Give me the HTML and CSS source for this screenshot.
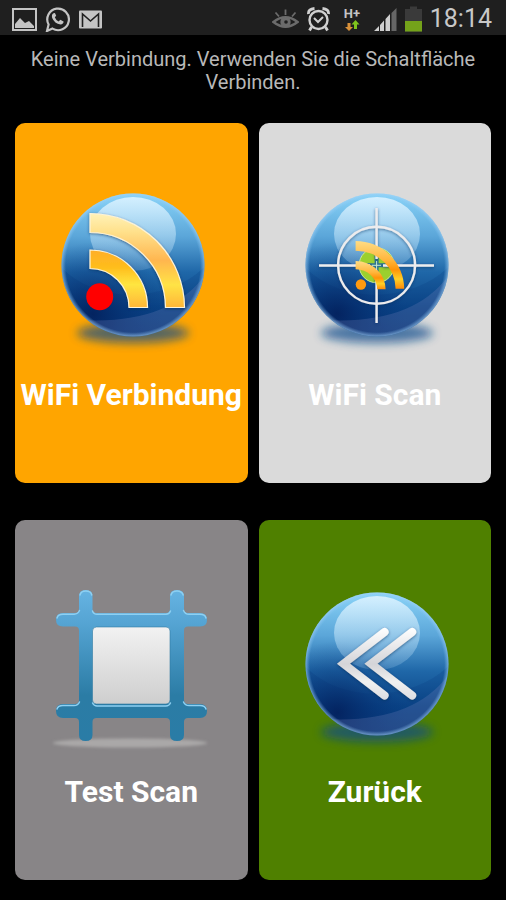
FILE: index.html
```html
<!DOCTYPE html>
<html lang="de">
<head>
  <meta charset="UTF-8">
  <title>WiFi Scan</title>
  <meta name="viewport" content="width=device-width, initial-scale=1">
  <link rel="stylesheet" href="styles.css">
</head>
<body>

  <!-- shared gradients and the glass ball -->
  <svg class="defs" aria-hidden="true">
    <defs>
      <linearGradient id="ballFill" x1="0" y1="0" x2="0" y2="1">
        <stop offset="0" stop-color="#8ad4f8"/>
        <stop offset="0.3" stop-color="#5ba6d9"/>
        <stop offset="0.55" stop-color="#1f67a8"/>
        <stop offset="0.8" stop-color="#0b4587"/>
        <stop offset="1" stop-color="#0a3a78"/>
      </linearGradient>
      <radialGradient id="ballDark" cx="0.22" cy="0.84" r="0.5">
        <stop offset="0" stop-color="#021a55" stop-opacity="0.75"/>
        <stop offset="1" stop-color="#04357c" stop-opacity="0"/>
      </radialGradient>
      <radialGradient id="ballRim" cx="0.5" cy="0.5" r="0.5">
        <stop offset="0.94" stop-color="#8cc8f4" stop-opacity="0"/>
        <stop offset="1" stop-color="#a5d2f6" stop-opacity="0.6"/>
      </radialGradient>
      <linearGradient id="ballShine" x1="0" y1="0" x2="0" y2="1">
        <stop offset="0" stop-color="#d8f1ff" stop-opacity="0.95"/>
        <stop offset="0.5" stop-color="#bfe2f7" stop-opacity="0.6"/>
        <stop offset="1" stop-color="#a5cfee" stop-opacity="0.2"/>
      </linearGradient>
      <linearGradient id="wave" x1="0" y1="0" x2="0" y2="1">
        <stop offset="0" stop-color="#fff2b8"/>
        <stop offset="0.2" stop-color="#ffe08a"/>
        <stop offset="0.5" stop-color="#ffb64f"/>
        <stop offset="0.76" stop-color="#ffe345"/>
        <stop offset="1" stop-color="#ffb638"/>
      </linearGradient>
      <linearGradient id="waveInner" x1="0" y1="0" x2="0" y2="1">
        <stop offset="0" stop-color="#ffae28"/>
        <stop offset="0.3" stop-color="#ffbd1c"/>
        <stop offset="0.6" stop-color="#ffe540"/>
        <stop offset="1" stop-color="#ffb638"/>
      </linearGradient>
      <linearGradient id="waveSmall" x1="0" y1="0" x2="0" y2="1">
        <stop offset="0" stop-color="#ffdc85"/>
        <stop offset="0.4" stop-color="#ffb63c"/>
        <stop offset="0.6" stop-color="#ff9408"/>
        <stop offset="0.8" stop-color="#ffd026"/>
        <stop offset="1" stop-color="#ff8a08"/>
      </linearGradient>
      <linearGradient id="frameFill" x1="0" y1="0" x2="0" y2="1">
        <stop offset="0" stop-color="#66b3e2"/>
        <stop offset="0.22" stop-color="#55a4d3"/>
        <stop offset="0.7" stop-color="#2b7ca5"/>
        <stop offset="1" stop-color="#2a7ca6"/>
      </linearGradient>
      <linearGradient id="paper" x1="0" y1="0" x2="0" y2="1">
        <stop offset="0" stop-color="#f2f2f2"/>
        <stop offset="1" stop-color="#cecece"/>
      </linearGradient>
      <linearGradient id="arrowFill" gradientUnits="userSpaceOnUse" x1="0" y1="40" x2="0" y2="112">
        <stop offset="0" stop-color="#ffffff"/>
        <stop offset="0.5" stop-color="#d4d4d8"/>
        <stop offset="0.75" stop-color="#f0f0f0"/>
        <stop offset="1" stop-color="#dddde2"/>
      </linearGradient>
      <filter id="blur" x="-30%" y="-120%" width="160%" height="340%"><feGaussianBlur stdDeviation="5"/></filter>
      <filter id="blurSmall" x="-10%" y="-80%" width="120%" height="260%"><feGaussianBlur stdDeviation="1.6"/></filter>
      <filter id="drop" x="-20%" y="-20%" width="140%" height="140%"><feDropShadow dx="0" dy="1" stdDeviation="1.5" flood-color="#032a5c" flood-opacity="0.6"/></filter>
      <clipPath id="ballClip"><circle cx="82" cy="74" r="71"/></clipPath>
      <symbol id="ball" viewBox="0 0 160 164">
        <ellipse cx="82" cy="142" rx="56" ry="10" fill="#0d4c8c" opacity="0.7" filter="url(#blur)"/>
        <circle cx="82" cy="74" r="71.5" fill="url(#ballFill)"/>
        <g clip-path="url(#ballClip)">
          <path d="M0 64Q26 102 80 104Q136 102 164 64V160H0Z" fill="#05357c" opacity="0.2"/>
          <circle cx="82" cy="74" r="71.5" fill="url(#ballDark)"/>
          <path d="M30 129Q118 134 154 84V150H30Z" fill="#8a8dc4" opacity="0.22"/>
        </g>
        <circle cx="82" cy="74" r="71.5" fill="url(#ballRim)"/>
        <ellipse cx="82" cy="43" rx="43" ry="37" fill="url(#ballShine)"/>
      </symbol>
    </defs>
  </svg>

  <header class="status-bar">
    <div class="status-icons">
      <svg width="25" height="26" viewBox="0 0 25 26">
        <rect x="1" y="3" width="23" height="21" fill="none" stroke="#c4c4c4" stroke-width="2"/>
        <path d="M3 22V18L8 12L13 17L17 15L22 20V22Z" fill="#c4c4c4"/>
      </svg>
      <svg width="25" height="26" viewBox="0 0 25 26">
        <path d="M2 25L3.600 18.500A10.800 10.800 0 1 1 7.500 22.600Z" fill="none" stroke="#c4c4c4" stroke-width="2.200"/>
        <path d="M8.500 7.200Q6.200 8.500 7.200 12Q9.500 17.500 15.500 18.600Q18.500 18.300 18.600 15.600L15.300 13.700L13.600 15.400Q10.800 14.200 9.800 11.300L11.200 9.700L9.900 7Z" fill="#c4c4c4"/>
      </svg>
      <svg width="25" height="26" viewBox="0 0 25 26">
        <rect x="1" y="4.500" width="23" height="18" rx="1" fill="#c4c4c4"/>
        <path d="M4.500 21V8L12.500 15L20.500 8V21" fill="none" stroke="#1f1f1f" stroke-width="1.600"/>
      </svg>
    </div>
    <div class="status-icons">
      <svg width="27" height="26" viewBox="0 0 27 26">
        <path d="M1.500 16Q13.500 6.500 25.500 16Q13.500 25.500 1.500 16Z" fill="none" stroke="#6b6b6b" stroke-width="2.600"/>
        <circle cx="13.500" cy="16" r="5.200" fill="#6b6b6b"/>
        <circle cx="14" cy="16" r="1.800" fill="#1f1f1f"/>
        <path d="M13.500 3.500V9M3.500 6.500L7 10.500M23.500 6.500L20 10.500" stroke="#6b6b6b" stroke-width="1.800"/>
      </svg>
      <svg width="23" height="26" viewBox="0 0 23 26">
        <circle cx="11.500" cy="14" r="9" fill="none" stroke="#d0d0d0" stroke-width="2.400"/>
        <path d="M1.500 8Q1 3 7.500 2.500M21.500 8Q22 3 15.500 2.500M4.500 21L2.500 24.500M18.500 21L20.500 24.500" fill="none" stroke="#d0d0d0" stroke-width="2.800"/>
        <path d="M7 12L11 16L16 11" fill="none" stroke="#d0d0d0" stroke-width="2"/>
      </svg>
      <svg width="28" height="26" viewBox="0 0 28 26">
        <text class="net-label" x="14" y="12" text-anchor="middle">H+</text>
        <path d="M9.500 17H12.500V21H15L11 25L7 21H9.500Z" fill="#d9913a"/>
        <path d="M16 23H19V18.500H21.500L17.500 14L13.500 18.500H16Z" fill="#7fc41c"/>
      </svg>
      <svg width="23" height="26" viewBox="0 0 23 26">
        <path d="M0 25L5 20V25ZM6 25V19L10 14.500V25ZM11.500 25V13L16 8V25Z" fill="#cfcfcf"/>
        <path d="M17.500 25V7L22.500 2V25Z" fill="#666"/>
      </svg>
      <svg width="17" height="26" viewBox="0 0 17 26">
        <path d="M0 3H5V0.500H12V3H17V25.500H0Z" fill="#3a3a3a"/>
        <rect x="0" y="15" width="17" height="10.500" fill="#74a21a"/>
      </svg>
      <span class="clock">18:14</span>
    </div>
  </header>

  <main>
    <p class="message">Keine Verbindung. Verwenden Sie die Schaltfläche Verbinden.</p>

    <div class="tiles">
      <button type="button" class="tile connect">
        <svg width="160" height="164" viewBox="0 0 160 164">
          <use href="#ball" width="160" height="164"/>
          <g stroke="#fdf3d8" stroke-width="1.200" filter="url(#drop)">
            <path d="M39 22.500A94.500 94.500 0 0 1 133.500 116.500H114.500A75.500 75.500 0 0 0 39 41.500Z" fill="url(#wave)"/>
            <path d="M39 59A57.500 57.500 0 0 1 96.500 116.500H78A39 39 0 0 0 39 77.500Z" fill="url(#waveInner)"/>
          </g>
          <circle cx="48.700" cy="105.700" r="13.500" fill="#ff0000"/>
        </svg>
        <span>WiFi Verbindung</span>
      </button>

      <button type="button" class="tile scan">
        <svg width="160" height="164" viewBox="0 0 160 164">
          <use href="#ball" width="160" height="164"/>
          <circle cx="81.600" cy="74.300" r="17.500" fill="#9bd02e" stroke="#c9e89a" stroke-width="1"/>
          <path d="M81.600 58V90M66 74.300H97" stroke="#2c7390" stroke-width="4"/>
          <g fill="none" stroke="#ececee" stroke-width="2.400" filter="url(#drop)">
            <circle cx="81.600" cy="74.300" r="38.500"/>
            <path d="M81.600 17V68M81.600 81V132M24 74.500H75M88 74.500H139"/>
          </g>
          <path d="M60.600 50A48.600 48 0 0 1 109.200 97.700H100.600A40 38 0 0 0 60.600 59.700Z" fill="url(#waveSmall)"/>
          <path d="M60.600 70A30 28.500 0 0 1 90.600 98.300H82.200A21.600 20 0 0 0 60.600 78.300Z" fill="url(#waveSmall)"/>
          <circle cx="65.900" cy="93.500" r="5.200" fill="#ff9a10"/>
          <path d="M77 74.300H86M81.600 70V79" fill="none" stroke="#c9e8d0" stroke-width="1"/>
        </svg>
        <span>WiFi Scan</span>
      </button>

      <button type="button" class="tile test">
        <svg width="160" height="164" viewBox="0 0 160 164">
          <ellipse cx="79" cy="155" rx="77" ry="4.500" fill="#aaa8a8" filter="url(#blurSmall)"/>
          <path d="M41.500 8V21Q41.500 25 45.500 25H115Q119 25 119 21V8Q119 2 126 2Q133 2 133 8V21Q133 25 137 25H149Q156 25 156 32Q156 38.500 149 38.500H137Q133 38.500 133 42.500V112Q133 116 137 116H149Q156 116 156 123Q156 130 149 130H137Q133 130 133 134V147Q133 153 126 153Q119 153 119 147V134Q119 130 115 130H45.500Q41.500 130 41.500 134V147Q41.500 153 34.700 153Q28 153 28 147V134Q28 130 24 130H12Q5 130 5 123Q5 116 12 116H24Q28 116 28 112V42.500Q28 38.500 24 38.500H12Q5 38.500 5 32Q5 25 12 25H24Q28 25 28 21V8Q28 2 34.700 2Q41.500 2 41.500 8Z" fill="url(#frameFill)"/>
          <rect x="41.500" y="39" width="77.500" height="77" rx="4" fill="url(#paper)" stroke="#2f7ba3" stroke-width="0.600"/>
          <g fill="none" stroke="#8ed0f2" stroke-width="1.400" stroke-linecap="round">
            <path d="M29 7Q30 3 34.700 3Q40 3 40.800 7M120 7Q121 3 126 3Q131 3 132.200 7"/>
            <path d="M6 30Q7 26.300 12 26.300H23Q27 26 28.500 22.500M41.500 23Q42.500 26.300 46 26.300H115Q118.500 26 119.500 23M132.500 22.500Q134 26.300 138 26.300H149Q154 26.300 155 30"/>
            <path d="M6 121Q7 117.500 12 117.500H23Q27 117.500 28.500 114M41.500 115Q43 118 46 118H115Q118 118 119.500 115M132.500 114Q134 117.500 138 117.500H149Q154 117.500 155 121"/>
          </g>
        </svg>
        <span>Test Scan</span>
      </button>

      <button type="button" class="tile back">
        <svg width="160" height="164" viewBox="0 0 160 164">
          <use href="#ball" y="2" width="160" height="164"/>
          <g fill="none" stroke="url(#arrowFill)" stroke-width="8" stroke-linecap="round" filter="url(#drop)">
            <path d="M89.600 44L48.500 75.700L89.600 107.500"/>
            <path d="M117.200 44L76 75.700L117.200 107.500"/>
          </g>
        </svg>
        <span>Zurück</span>
      </button>
    </div>
  </main>

</body>
</html>
```

FILE: styles.css
```css
* { box-sizing: border-box; }
body { margin: 0; background: #000; font-family: Roboto, "Noto Sans", sans-serif; }
.defs { position: absolute; width: 0; height: 0; }

.status-bar { display: flex; justify-content: space-between; align-items: center; height: 35px; padding: 2px 14px 0 12px; background: #1f1f1f; }
.status-icons { display: flex; align-items: center; gap: 8px; }
.status-icons svg { display: block; }
.net-label { font-size: 13px; font-weight: bold; fill: #c4c4c4; }
.clock { font-size: 25px; line-height: 33px; color: #c8c8c8; }

.message { margin: 0; padding: 13px 24px 0; font-size: 20px; line-height: 23px; text-align: center; color: #b8b8b8; }

.tiles { display: grid; grid-template-columns: 1fr 1fr; gap: 37px 11px; padding: 29px 15px 19px; }
.tile { display: flex; flex-direction: column; align-items: center; gap: 22px; min-width: 0; min-height: 360px; padding: 68px 0 0; border: none; border-radius: 10px; color: #fff; font-family: inherit; font-size: 30px; font-weight: bold; line-height: 36px; cursor: pointer; }
.tile span { white-space: nowrap; }
.connect { background: #ffa500; }
.scan { background: #dadada; }
.test { background: #888587; }
.back { background: #4f8000; }
```
